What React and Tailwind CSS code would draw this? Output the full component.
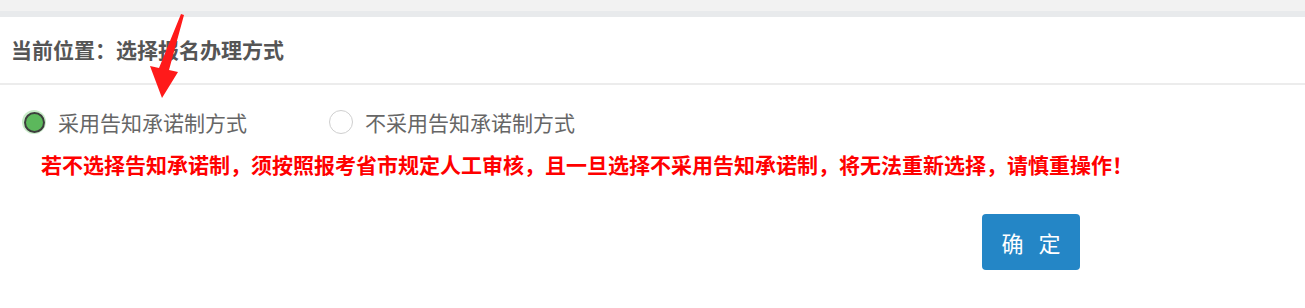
import { useState } from 'react';

const font = { fontFamily: '"Microsoft YaHei", "Noto Sans CJK SC", "Noto Sans", sans-serif' };

const Radio = ({ checked, label, onClick }) => (
  <button type="button" onClick={onClick} className="flex items-center gap-[12px] text-left">
    {checked ? (
      <span className="flex h-[24px] w-[24px] items-center justify-center rounded-full bg-[#c8ebc8]">
        <span className="h-[21px] w-[21px] rounded-full border-[2px] border-[#3d3d3d] bg-[#5cb85c]" />
      </span>
    ) : (
      <span className="h-[24px] w-[24px] rounded-full border border-[#cfcfcf] bg-white" />
    )}
    <span className="text-[21px] leading-[28px] text-[#666]">{label}</span>
  </button>
);

export default function App() {
  const [mode, setMode] = useState('yes');

  return (
    <div className="relative h-[308px] w-full bg-white" style={font}>
      {/* top strip */}
      <div className="h-[11px] bg-[#f2f2f2]" />
      <div className="h-[6px] bg-[#e8eaec]" />

      {/* breadcrumb */}
      <div className="flex h-[68px] items-center border-b-2 border-[#ececec] pl-[11px]">
        <span className="text-[21px] font-bold text-[#555]">当前位置：选择报名办理方式</span>
      </div>

      {/* options */}
      <div className="flex items-center pl-[22px] pt-[23px]">
        <Radio checked={mode === 'yes'} label="采用告知承诺制方式" onClick={() => setMode('yes')} />
        <div className="ml-[82px]">
          <Radio checked={mode === 'no'} label="不采用告知承诺制方式" onClick={() => setMode('no')} />
        </div>
      </div>

      <p className="mt-[14px] pl-[41px] text-[21px] font-bold leading-[28px] text-[#ff0000]">
        若不选择告知承诺制，须按照报考省市规定人工审核，且一旦选择不采用告知承诺制，将无法重新选择，请慎重操作！
      </p>

      <div className="mt-[36px] flex pl-[982px]">
        <button
          type="button"
          className="flex h-[56px] w-[98px] items-center justify-center gap-[15px] rounded-[4px] bg-[#2486c6] text-[22px] text-white"
        >
          <span>确</span>
          <span>定</span>
        </button>
      </div>

      {/* annotation arrow */}
      <svg className="pointer-events-none absolute left-0 top-0" width="220" height="110" viewBox="0 0 220 110">
        <polygon points="181,14 184,15 169,70 178,72 162,98 150,66 159,68" fill="#ff1a1a" />
      </svg>
    </div>
  );
}
